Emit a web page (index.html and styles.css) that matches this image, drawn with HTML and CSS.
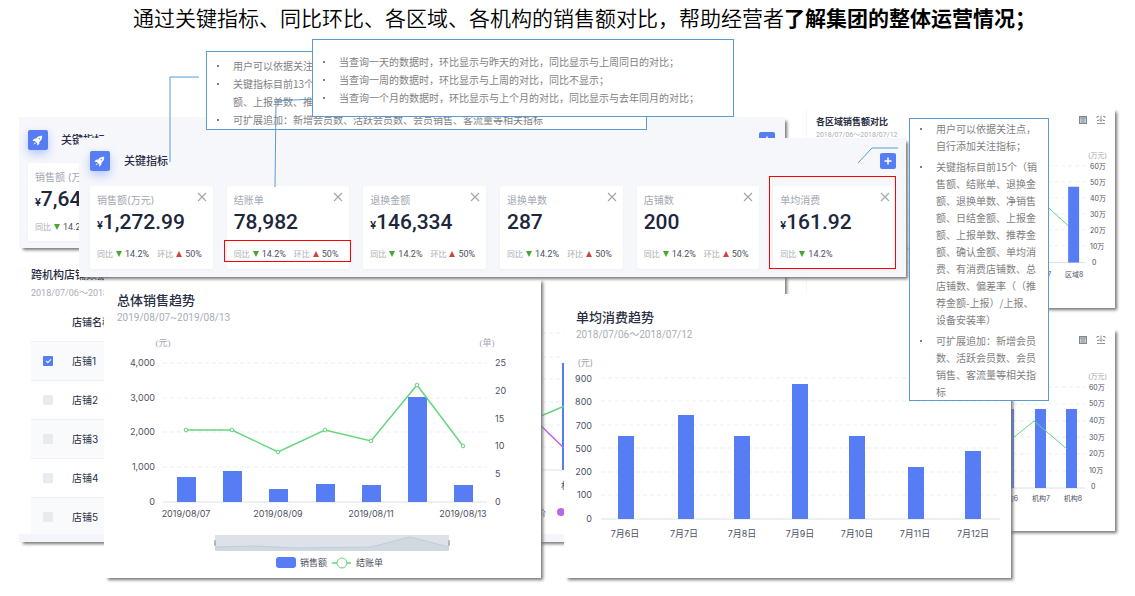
FILE: index.html
```html
<!DOCTYPE html>
<html lang="zh-CN">
<head>
  <meta charset="UTF-8">
  <meta name="viewport" content="width=device-width, initial-scale=1.0">
  <title>集团运营情况</title>
  <link rel="stylesheet" href="styles.css">
</head>
<body>
  <svg class="defs" aria-hidden="true">
    <symbol id="rocket" viewBox="0 0 20 20">
      <path d="M14.2 5.8c-2.6-.2-4.6.8-6 2.700l-2.300.3-1.300 1.900 2.100.2 2.400 2.400.2 2.100 1.900-1.300.3-2.300c1.900-1.400 2.900-3.400 2.700-6z" fill="#fff"/>
      <path d="M6.800 12.200l-1.300 2.300 2.300-1.300z" fill="#fff"/>
      <circle cx="11.300" cy="8.700" r=".7" fill="#567df4"/>
    </symbol>
    <symbol id="close" viewBox="0 0 10 10">
      <path d="M1 1l8 8M9 1l-8 8" stroke="#a3a8b0" stroke-width="1.200" fill="none"/>
    </symbol>
    <symbol id="plus" viewBox="0 0 16 16">
      <path d="M8 4.500v7M4.500 8h7" stroke="#fff" stroke-width="1.500" fill="none"/>
    </symbol>
    <symbol id="sheet" viewBox="0 0 10 10">
      <rect x="1.500" y="1.500" width="7" height="7" fill="#c9ced2" stroke="#7f888f"/>
      <path d="M2 3h6M4 3v5M6 3v5" stroke="#7f888f" stroke-width=".8"/>
    </symbol>
    <symbol id="download" viewBox="0 0 10 10">
      <path d="M1 3V1.500h2M7 1.500h2V3M1 5.500h2M7 5.500h2M1 8.500h8M5 .5v6M3 4.300l2 2 2-2" fill="none" stroke="#8d949a"/>
    </symbol>
  </svg>

  <h1 class="title">通过关键指标、同比环比、各区域、各机构的销售额对比，帮助经营者<b>了解集团的整体运营情况；</b></h1>

  <main class="board">
    <!-- 各区域销售额对比 -->
    <section class="panel region">
      <header class="mini-head">
        <div>
          <h2>各区域销售额对比</h2>
          <p>2018/07/06～2018/07/12</p>
        </div>
        <div class="tools">
          <button aria-label="表格"><svg><use href="#sheet"/></svg></button>
          <button aria-label="下载"><svg><use href="#download"/></svg></button>
        </div>
      </header>
      <svg class="chart mini" viewBox="0 0 309 165">
        <path class="grid" d="M10 23h269M10 39h269M10 55h269M10 71h269M10 87h269M10 103h269"/>
        <path class="axis" d="M10 120h269"/>
        <path class="bar" d="M231 44h11v76h-11zM262 44h11v76h-11z"/>
        <path class="line" d="M86 90l17 18 34-40 32 30 34-20 34-18 25 23"/>
        <g class="unit"><text x="282" y="15">(万元)</text></g>
        <g class="num">
          <text x="284" y="26">60万</text><text x="284" y="42">50万</text><text x="284" y="58">40万</text>
          <text x="284" y="74">30万</text><text x="284" y="90">20万</text><text x="284" y="106">10万</text>
          <text x="286" y="122">0</text>
        </g>
        <g class="num mid"><text x="236" y="134">区域7</text><text x="268" y="134">区域8</text></g>
      </svg>
    </section>

    <!-- 各机构销售额对比 -->
    <section class="panel org">
      <header class="mini-head">
        <div class="tools">
          <button aria-label="表格"><svg><use href="#sheet"/></svg></button>
          <button aria-label="下载"><svg><use href="#download"/></svg></button>
        </div>
      </header>
      <svg class="chart mini" viewBox="0 0 309 168">
        <path class="grid" d="M200 24h79M200 41h79M200 58h79M200 74h79M200 91h79M200 108h79"/>
        <path class="axis" d="M200 125h79"/>
        <path class="bar" d="M197 46h11v79h-11zM229 46h11v79h-11zM260 46h11v79h-11z"/>
        <path class="line" d="M202 79l26-21 33 28"/>
        <g class="unit"><text x="282" y="16">(万元)</text></g>
        <g class="num">
          <text x="283" y="27">60万</text><text x="283" y="43">50万</text><text x="283" y="60">40万</text>
          <text x="283" y="77">30万</text><text x="283" y="93">20万</text><text x="283" y="110">10万</text>
          <text x="285" y="126">0</text>
        </g>
        <g class="num mid"><text x="203" y="138">机构6</text><text x="235" y="138">机构7</text><text x="267" y="138">机构8</text></g>
      </svg>
    </section>

    <!-- 跨机构店铺数据 -->
    <section class="panel shops">
      <div class="shop-list">
        <h2>跨机构店铺数据</h2>
        <p>2018/07/06～2018/07/12</p>
        <table>
          <thead><tr><th></th><th>店铺名称</th></tr></thead>
          <tbody>
            <tr><td><input type="checkbox" id="s1" checked></td><td><label for="s1">店铺1</label></td></tr>
            <tr><td><input type="checkbox" id="s2"></td><td><label for="s2">店铺2</label></td></tr>
            <tr><td><input type="checkbox" id="s3"></td><td><label for="s3">店铺3</label></td></tr>
            <tr><td><input type="checkbox" id="s4"></td><td><label for="s4">店铺4</label></td></tr>
            <tr><td><input type="checkbox" id="s5"></td><td><label for="s5">店铺5</label></td></tr>
          </tbody>
        </table>
      </div>
      <svg class="chart" viewBox="0 0 285 282">
        <path class="grid" d="M0 81h270M0 105h270M0 127h270M0 150h270M0 173h270M0 195h270"/>
        <path class="axis" d="M0 218h270"/>
        <path class="bar" d="M62 111h13v107h-13z"/>
        <path class="line" d="M34 167l35-15"/>
        <path class="line purple" d="M34 167l35 34"/>
        <g class="num"><text x="61" y="237">机构5</text></g>
        <g class="num"><text x="28" y="264">单价</text></g>
        <circle cx="61" cy="260" r="4" fill="#b867e8"/>
      </svg>
    </section>

    <!-- 关键指标 (后层) -->
    <section class="panel kpi kpi-back">
      <header class="kpi-head">
        <span class="logo"><svg><use href="#rocket"/></svg></span>
        <h2>关键指标</h2>
        <button class="add" aria-label="添加"><svg><use href="#plus"/></svg></button>
      </header>
      <div class="cards">
        <article class="card">
          <h3>销售额 (万元)</h3>
          <strong><small>¥</small>7,642.99</strong>
          <p>同比 <i class="down"></i><span>14.2%</span></p>
        </article>
      </div>
    </section>

    <!-- 总体销售趋势 -->
    <section class="panel trend">
      <h2>总体销售趋势</h2>
      <p>2019/08/07~2019/08/13</p>
      <svg class="chart" viewBox="0 0 437 248">
        <path class="grid" d="M59 35h324M59 70h324M59 104h324M59 139h324"/>
        <path class="axis" d="M59 174h324"/>
        <path class="bar" d="M73 149h19v25h-19zM119 143h19v31h-19zM165 161h19v13h-19zM212 156h19v18h-19zM258 157h19v17h-19zM304 69h19v105h-19zM350 157h19v17h-19z"/>
        <path class="line" d="M82 102h46l46 22 47-22 46 11 46-56 46 61"/>
        <g class="dots">
          <circle cx="82" cy="102" r="1.800"/><circle cx="128" cy="102" r="1.800"/><circle cx="174" cy="124" r="1.800"/>
          <circle cx="221" cy="102" r="1.800"/><circle cx="267" cy="113" r="1.800"/><circle cx="313" cy="57" r="1.800"/>
          <circle cx="359" cy="118" r="1.800"/>
        </g>
        <g class="unit mid song"><text x="59" y="18">(元)</text><text x="383" y="18">(单)</text></g>
        <g class="num end">
          <text x="51" y="38">4,000</text><text x="51" y="73">3,000</text><text x="51" y="107">2,000</text>
          <text x="51" y="142">1,000</text><text x="51" y="177">0</text>
        </g>
        <g class="num">
          <text x="391" y="38">25</text><text x="391" y="66">20</text><text x="391" y="94">15</text>
          <text x="391" y="121">10</text><text x="391" y="149">5</text><text x="391" y="177">0</text>
        </g>
        <g class="num mid">
          <text x="82" y="189">2019/08/07</text><text x="174" y="189">2019/08/09</text>
          <text x="267" y="189">2019/08/11</text><text x="359" y="189">2019/08/13</text>
        </g>
        <!-- data zoom -->
        <rect x="111" y="207" width="234" height="16" fill="#dce1ea"/>
        <path d="M111 223v-4l40-1 40 2 76-1 39-10 39 10v4z" fill="#d0d8e0"/>
        <path d="M111 219l40-1 40 2 76-1 39-10 39 10" fill="none" stroke="#c3ccd6"/>
        <rect x="110" y="212" width="2" height="6" rx="1" fill="#a7b7cc"/>
        <rect x="344" y="212" width="2" height="6" rx="1" fill="#a7b7cc"/>
        <!-- legend -->
        <rect class="bar" x="172" y="229" width="20" height="11" rx="3"/>
        <path class="line" d="M228 235h19"/>
        <g class="dots"><circle cx="238" cy="235" r="5"/></g>
        <g class="num"><text x="196" y="238">销售额</text><text x="252" y="238">结账单</text></g>
      </svg>
    </section>

    <!-- 单均消费趋势 -->
    <section class="panel average">
      <h2>单均消费趋势</h2>
      <p>2018/07/06～2018/07/12</p>
      <svg class="chart" viewBox="0 0 447 230">
        <path class="grid" d="M37 32h399M37 55h399M37 79h399M37 102h399M37 126h399M37 149h399"/>
        <path class="axis" d="M37 173h399"/>
        <path class="bar" d="M54 90h16v83h-16zM114 69h16v104h-16zM170 90h16v83h-16zM228 38h16v135h-16zM285 90h16v83h-16zM344 121h16v52h-16zM401 105h16v68h-16z"/>
        <g class="unit end"><text x="29" y="20">(元)</text></g>
        <g class="num end">
          <text x="28" y="36">900</text><text x="28" y="59">800</text><text x="28" y="83">700</text>
          <text x="28" y="106">500</text><text x="28" y="129">200</text><text x="28" y="152">100</text>
          <text x="28" y="176">0</text>
        </g>
        <g class="num mid">
          <text x="61" y="191">7月6日</text><text x="120" y="191">7月7日</text><text x="178" y="191">7月8日</text>
          <text x="236" y="191">7月9日</text><text x="293" y="191">7月10日</text><text x="351" y="191">7月11日</text>
          <text x="409" y="191">7月12日</text>
        </g>
      </svg>
    </section>

    <!-- 关键指标 -->
    <section class="panel kpi kpi-front">
      <header class="kpi-head">
        <span class="logo"><svg><use href="#rocket"/></svg></span>
        <h2>关键指标</h2>
        <button class="add" aria-label="添加"><svg><use href="#plus"/></svg></button>
      </header>
      <div class="cards">
        <article class="card">
          <button class="close" aria-label="关闭"><svg><use href="#close"/></svg></button>
          <h3>销售额(万元)</h3>
          <strong><small>¥</small>1,272.99</strong>
          <p>同比 <i class="down"></i><span>14.2%</span> 环比 <i class="up"></i><span>50%</span></p>
        </article>
        <article class="card">
          <button class="close" aria-label="关闭"><svg><use href="#close"/></svg></button>
          <h3>结账单</h3>
          <strong>78,982</strong>
          <p>同比 <i class="down"></i><span>14.2%</span> 环比 <i class="up"></i><span>50%</span></p>
        </article>
        <article class="card">
          <button class="close" aria-label="关闭"><svg><use href="#close"/></svg></button>
          <h3>退换金额</h3>
          <strong><small>¥</small>146,334</strong>
          <p>同比 <i class="down"></i><span>14.2%</span> 环比 <i class="up"></i><span>50%</span></p>
        </article>
        <article class="card">
          <button class="close" aria-label="关闭"><svg><use href="#close"/></svg></button>
          <h3>退换单数</h3>
          <strong>287</strong>
          <p>同比 <i class="down"></i><span>14.2%</span> 环比 <i class="up"></i><span>50%</span></p>
        </article>
        <article class="card">
          <button class="close" aria-label="关闭"><svg><use href="#close"/></svg></button>
          <h3>店铺数</h3>
          <strong>200</strong>
          <p>同比 <i class="down"></i><span>14.2%</span> 环比 <i class="up"></i><span>50%</span></p>
        </article>
        <article class="card">
          <button class="close" aria-label="关闭"><svg><use href="#close"/></svg></button>
          <h3>单均消费</h3>
          <strong><small>¥</small>161.92</strong>
          <p>同比 <i class="down"></i><span>14.2%</span></p>
        </article>
      </div>
    </section>

    <!-- 批注 -->
    <ul class="note note-metrics">
      <li>用户可以依据关注点，自行添加关注指标；</li>
      <li>关键指标目前13个（销售额、结账单、退换金额、退换单数、净销售额、日结金额、上报单数、推荐金额、确认金额、单均消费、有消费店铺数）</li>
      <li>可扩展追加：新增会员数、活跃会员数、会员销售、客流量等相关指标</li>
    </ul>
    <svg class="leads" viewBox="0 0 1135 596">
      <path d="M199 77h-29v85M312 99l-36 2-1 86M858 163l14-15h26"/>
    </svg>
    <ul class="note note-compare">
      <li>当查询一天的数据时，环比显示与昨天的对比，同比显示与上周同日的对比；</li>
      <li>当查询一周的数据时，环比显示与上周的对比，同比不显示；</li>
      <li>当查询一个月的数据时，环比显示与上个月的对比，同比显示与去年同月的对比；</li>
    </ul>
    <ul class="note note-add">
      <li>用户可以依据关注点，自行添加关注指标；</li>
      <li>关键指标目前15个（销售额、结账单、退换金额、退换单数、净销售额、日结金额、上报金额、上报单数、推荐金额、确认金额、单均消费、有消费店铺数、总店铺数、偏差率（（推荐金额-上报）/上报、设备安装率）</li>
      <li>可扩展追加：新增会员数、活跃会员数、会员销售、客流量等相关指标</li>
    </ul>
    <div class="mark mark-ratio"></div>
    <div class="mark mark-card"></div>
  </main>
</body>
</html>
```

FILE: styles.css
```css
* { box-sizing: border-box; margin: 0; padding: 0; }
body { position: relative; min-height: 100vh; overflow: hidden; background: #fff; color: #2b3145; font-family: Inter, "Noto Sans CJK SC", sans-serif; font-size: 9px; }
button { display: block; border: 0; background: none; }
button svg { display: block; width: 100%; height: 100%; }
.defs { position: absolute; width: 0; height: 0; }

.title { padding: 3px 0 0 133px; color: #000; font: 350 21px/28px "Noto Sans CJK SC", sans-serif; white-space: nowrap; }
.title b { font-weight: 700; }

/* slide canvas with overlapping windows */
.panel { position: absolute; background: #fff; box-shadow: 3px 3px 3px -1px #777; overflow: hidden; }
.region { left: 806px; top: 108px; width: 309px; height: 200px; border-left: 1px solid #f7f7f9; }
.org { left: 806px; top: 328px; width: 309px; height: 203px; }
.shops { left: 19px; top: 252px; width: 766px; height: 290px; display: flex; border-bottom: 8px solid #f3f5fa; }
.kpi-back { left: 19px; top: 117px; width: 766px; height: 131px; }
.trend { left: 104px; top: 278px; width: 437px; height: 300px; padding-top: 13px; }
.average { left: 564px; top: 294px; width: 447px; height: 284px; padding-top: 14px; }
.kpi-front { left: 79px; top: 138px; width: 827px; height: 139px; }

.panel h2 { color: #272d42; font-weight: 500; }
.panel p { color: #a8adb5; }
.trend h2, .average h2 { padding-left: 12px; font-size: 13px; line-height: 18px; }
.trend h2 { padding-left: 13px; }
.trend p, .average p { padding-left: 12px; line-height: 18px; font-size: 10px; font-family: Roboto, "Noto Sans CJK SC", sans-serif; }
.trend p { padding-left: 13px; margin-bottom: 1px; }
.average p { margin-bottom: 2px; }

/* charts */
.chart { display: block; width: 100%; }
.grid { fill: none; stroke: #ebedf0; stroke-dasharray: 4 3; }
.axis { fill: none; stroke: #dde0e4; }
.bar { fill: #567df4; }
.line { fill: none; stroke: #64d67b; stroke-width: 1.5; }
.purple { stroke: #b867e8; }
.dots { fill: #fff; stroke: #64d67b; }
.num { fill: #4c5263; font-size: 9px; }
.unit { fill: #a0a5ad; font-size: 9px; }
.song { font-family: "Liberation Serif", "Noto Sans CJK SC", serif; }
.mid { text-anchor: middle; }
.end { text-anchor: end; }
.mini .num, .mini .unit { font-size: 7px; }
.mini .line { stroke-width: 1; }

.mini-head { display: flex; justify-content: space-between; height: 35px; padding: 7px 9px 0; }
.mini-head h2 { font-size: 9px; line-height: 14px; font-weight: 700; }
.mini-head p { font: 7px/12px Roboto, "Noto Sans CJK SC", sans-serif; }
.tools { display: flex; gap: 8px; margin-left: auto; }
.tools button { width: 10px; height: 10px; }

/* shop table */
.shop-list { flex: 0 0 481px; padding: 14px 0 0 12px; }
.shop-list h2 { font-size: 11px; line-height: 18px; }
.shop-list p { font: 9px/18px Roboto, "Noto Sans CJK SC", sans-serif; }
.shops .chart { flex: 1; min-width: 0; }
.shops table { width: 100%; border-collapse: collapse; font-size: 10px; }
.shops th { height: 39px; text-align: left; font-weight: 500; }
.shops td { height: 39px; border-top: 1px solid #eef0f3; }
.shops td:first-child { width: 41px; padding-left: 12px; }
.shops tbody tr:nth-child(odd) { background: #f9fafc; }
.shops input { appearance: none; display: block; width: 10px; height: 10px; border-radius: 1px; background: #e8ebee; }
.shops input:checked { background: #567df4; }
.shops input:checked::after { content: ""; display: block; width: 4px; height: 2px; margin: 3px; border: solid #fff; border-width: 0 0 1px 1px; transform: rotate(-45deg); }

/* key metrics */
.kpi { background: #f6f7fb; }
.kpi-head { display: flex; align-items: center; height: 46px; padding: 0 10px 0 9px; }
.kpi-head h2 { font-size: 11px; line-height: 16px; }
.logo { width: 20px; height: 20px; margin-right: 13px; border-radius: 2px; background: #567df4; box-shadow: 0 4px 10px #b4c5fa; }
.logo svg { display: block; width: 100%; height: 100%; }
.add { width: 16px; height: 16px; margin-left: auto; border-radius: 2px; background: #567df4; }
.cards { display: grid; grid-template-columns: repeat(6, minmax(0, 1fr)); gap: 14px; padding: 0 10px 0 9px; }
.card { position: relative; height: 78px; padding: 6px 7px; border-radius: 2px; background: #fff; box-shadow: 0 1px 3px #eceef4; white-space: nowrap; }
.card h3 { color: #a3a8b0; font-size: 10px; line-height: 16px; font-weight: 400; }
.card strong { display: block; color: #20263b; font: 500 21px/28px Roboto, sans-serif; }
.card small { font-size: 11px; line-height: 11px; }
.card p { display: flex; align-items: center; gap: 3px; margin-top: 7px; font-size: 8px; line-height: 14px; }
.card span { margin-right: 5px; color: #4c5263; font-size: 9px; font-family: Roboto, sans-serif; }
.close { position: absolute; top: 6px; right: 6px; width: 10px; height: 10px; }
.up, .down { border: 3px solid transparent; }
.up { border-top: 0; border-bottom: 6px solid #d2453f; }
.down { border-bottom: 0; border-top: 6px solid #44a834; }
.kpi-front .kpi-head, .kpi-front .cards { padding-left: 11px; }
.kpi-front .kpi-head { margin-bottom: 2px; }
.kpi-front .card { height: 83px; }
.kpi-front .card p { margin-top: 11px; }
.kpi-front .logo { margin-right: 14px; }

/* notes, lead lines and red marks */
.note { position: absolute; overflow: hidden; border: 1px solid #5b9bd5; background: #fff; color: #7f7f7f; font: 10px/18px "Noto Sans CJK SC", sans-serif; list-style: none; text-spacing-trim: space-all; }
.note li { position: relative; }
.note li::before { content: ""; position: absolute; left: -16px; top: 8px; width: 2px; height: 2px; background: #7f7f7f; }
.note-metrics { left: 206px; top: 51px; width: 441px; height: 79px; padding: 5px 58px 0 26px; }
.note-compare { left: 312px; top: 39px; width: 422px; height: 78px; padding: 13px 8px 0 26px; }
.note-add { left: 909px; top: 118px; width: 140px; height: 283px; padding: 1px 9px 0 26px; line-height: 17px; }
.note-add li { margin-bottom: 4px; }
.leads { position: absolute; left: 0; top: 0; width: 1135px; height: 596px; fill: none; stroke: #5b9bd5; pointer-events: none; }
.mark { position: absolute; border: 1px solid #f00; pointer-events: none; }
.mark-ratio { left: 224px; top: 240px; width: 127px; height: 22px; }
.mark-card { left: 769px; top: 176px; width: 127px; height: 93px; }
```
